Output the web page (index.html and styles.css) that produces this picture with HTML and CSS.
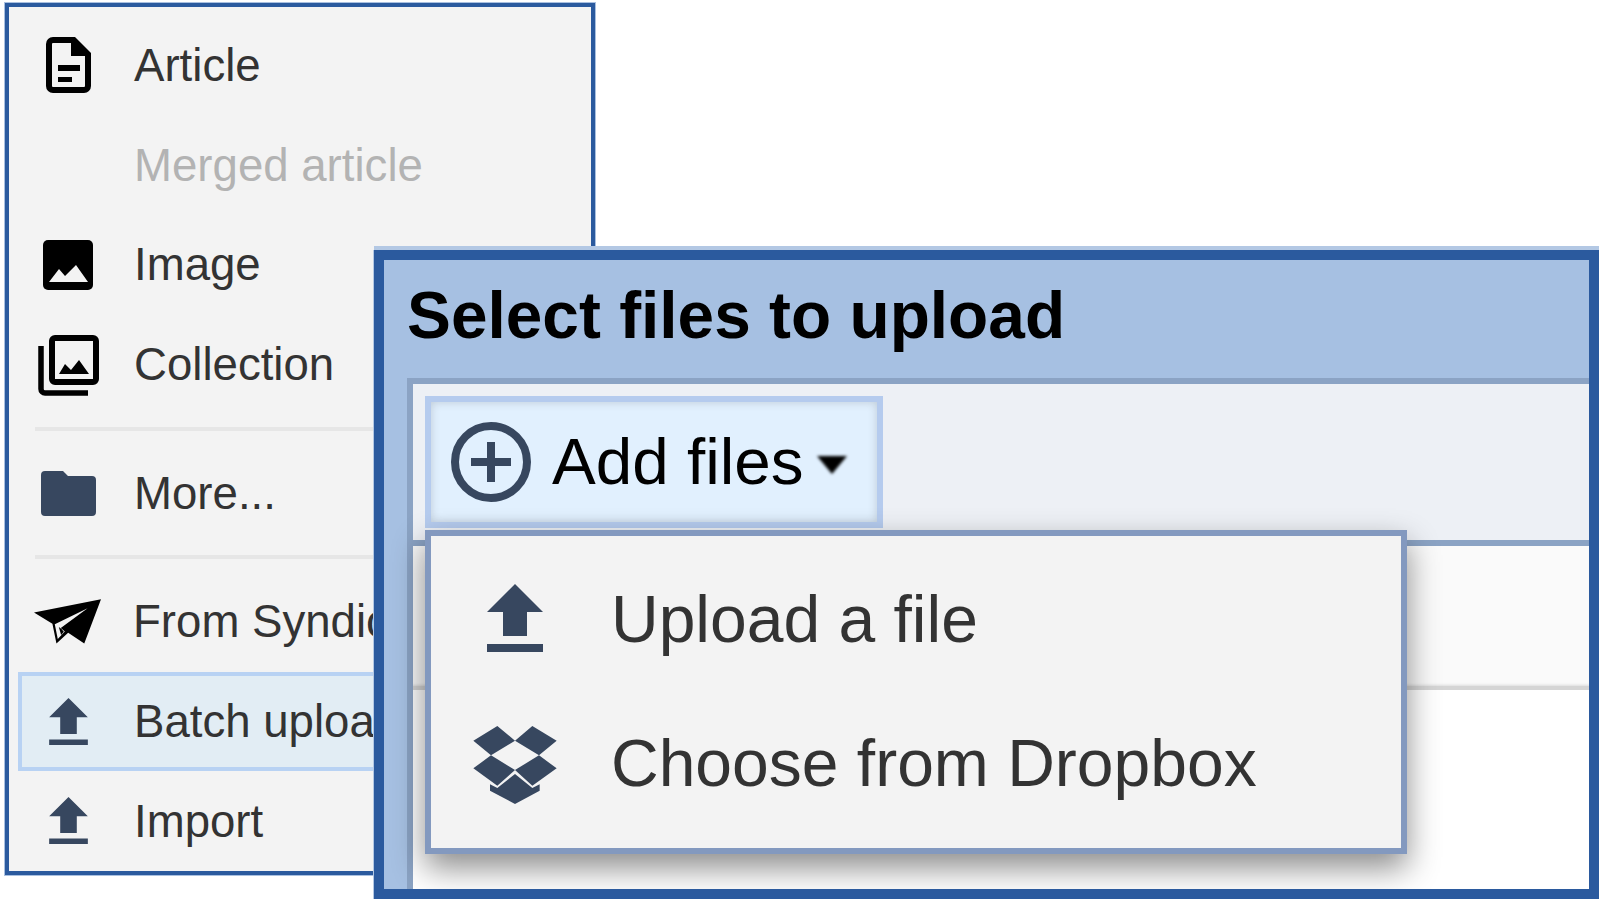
FILE: index.html
```html
<!DOCTYPE html>
<html lang="en">
<head>
  <meta charset="UTF-8" />
  <title>Select files to upload</title>
  <link rel="stylesheet" href="styles.css">
</head>
<body>
  <div class="new-menu">
    <div class="row">
      <span class="row-icon">
        <svg width="45" height="56" viewBox="0 0 45 56"><path fill-rule="evenodd" d="M7 0H29L45 16V49a7 7 0 0 1-7 7H7a7 7 0 0 1-7-7V7a7 7 0 0 1 7-7ZM7 6a1 1 0 0 0-1 1V49a1 1 0 0 0 1 1H38a1 1 0 0 0 1-1V19H25V6Z"/><path d="M12 28H34V34H12ZM12 40H26V45H12Z"/></svg>
      </span>
      <span class="row-label">Article</span>
    </div>
    <div class="row row-disabled">
      <span class="row-icon"></span>
      <span class="row-label">Merged article</span>
    </div>
    <div class="row">
      <span class="row-icon icon-image">
        <svg width="50" height="50" viewBox="0 0 50 50"><rect width="50" height="50" rx="5"/><path fill="#f3f3f3" d="M6 42L16 29L22 36L33 25L45 42Z"/></svg>
      </span>
      <span class="row-label">Image</span>
    </div>
    <div class="row">
      <span class="row-icon icon-collection">
        <svg width="61" height="61" viewBox="0 0 61 61"><rect x="14" y="3" width="44" height="44" rx="3" fill="none" stroke="#000" stroke-width="6"/><path d="M21 39L27 29L33 35L41 25L51 39Z"/><path d="M3 11V54a4 4 0 0 0 4 4H50" fill="none" stroke="#000" stroke-width="5.5"/></svg>
      </span>
      <span class="row-label">Collection</span>
    </div>
    <div class="divider"></div>
    <div class="row">
      <span class="row-icon icon-folder">
        <svg width="55" height="45" viewBox="0 0 55 45"><path fill="#37475f" d="M4 0H22L27 5H51a4 4 0 0 1 4 4V41a4 4 0 0 1-4 4H4a4 4 0 0 1-4-4V4a4 4 0 0 1 4-4Z"/></svg>
      </span>
      <span class="row-label">More...</span>
    </div>
    <div class="divider"></div>
    <div class="row">
      <span class="row-icon icon-plane">
        <svg width="67" height="45" viewBox="18 25 200 133"><path d="M18 65L218 25L168 157L120 125L85 157L73 98Z"/><path fill="#f3f3f3" d="M178 52L80 100L89 144L110 121L98 111Z"/><path d="M92 108L99 132L107 122L100 114Z"/></svg>
      </span>
      <span class="row-label">From Syndication</span>
    </div>
    <div class="row row-active">
      <span class="row-icon">
        <svg width="39" height="47" viewBox="0 0 56 68"><path fill="#37475f" d="M28 0L56 28H40V52H16V28H0ZM0 60H56V68H0Z"/></svg>
      </span>
      <span class="row-label">Batch upload</span>
    </div>
    <div class="row">
      <span class="row-icon">
        <svg width="39" height="47" viewBox="0 0 56 68"><path fill="#37475f" d="M28 0L56 28H40V52H16V28H0ZM0 60H56V68H0Z"/></svg>
      </span>
      <span class="row-label">Import</span>
    </div>
  </div>

  <div class="dialog">
    <h1 class="dialog-title">Select files to upload</h1>
    <div class="dialog-body">
      <div class="toolbar">
        <div class="add-button">
          <svg width="80" height="80" viewBox="0 0 80 80"><circle cx="40" cy="40" r="36" fill="none" stroke="#37475f" stroke-width="8"/><path fill="#37475f" d="M36 20H44V36H60V44H44V60H36V44H20V36H36Z"/></svg>
          <span class="add-label">Add files</span>
          <span class="caret"></span>
        </div>
      </div>
      <div class="file-row"></div>
    </div>

    <div class="add-menu">
      <div class="menu-row">
        <span class="menu-icon icon-upload">
          <svg width="56" height="68" viewBox="0 0 56 68"><path fill="#37475f" d="M28 0L56 28H40V52H16V28H0ZM0 60H56V68H0Z"/></svg>
        </span>
        <span>Upload a file</span>
      </div>
      <div class="menu-row">
        <span class="menu-icon icon-dropbox">
          <svg width="84" height="78" viewBox="0 0 250 234"><path fill="#37475f" d="M72 0L125 44L53 88L0 44ZM177 0L250 44L197 88L125 44ZM53 88L125 132L72 179L0 127ZM197 88L250 127L177 179L125 132ZM125 144L177 186L199 175V194L125 234L50 194V175L72 186Z"/></svg>
        </span>
        <span>Choose from Dropbox</span>
      </div>
    </div>
  </div>
</body>
</html>
```

FILE: styles.css
```css
html, body { margin: 0; padding: 0; height: 900px; overflow: hidden; background: #fff; }
body { font-family: "Liberation Sans", Arial, sans-serif; color: #333; }

/* the two windows overlap like on a desktop */
.new-menu { position: absolute; left: 5px; top: 3px; width: 590px; height: 872px; box-sizing: border-box; padding-top: 8px; border: 4px solid #2b5a9e; box-shadow: 0 0 0 1px #a9c0e0; background: #f3f3f3; font-size: 45.6px; overflow: hidden; }
.row { display: flex; align-items: center; gap: 7px; height: 99.7px; white-space: nowrap; }
.row-label { padding-top: 2px; }
.row-icon { display: flex; justify-content: center; align-items: center; flex: none; width: 118px; }
.icon-image { margin-top: 2px; }
.icon-collection { margin-top: 4px; }
.icon-folder { margin-top: 2px; }
.icon-plane { margin-left: -1px; }
.row-disabled { color: #b3b3b3; }
.row-active { box-sizing: border-box; height: 98.7px; margin: 1px 0 0 13px; gap: 20px; border-top: 4px solid #b8d2f3; border-bottom: 4px solid #b8d2f3; background: #e2edf4; box-shadow: -4px 0 0 #b8d2f3; }
.row-active .row-icon { width: 92px; }
.divider { height: 4px; margin: 13px 0 12px 26px; background: #e6e6e6; }

.dialog { position: absolute; left: 374px; top: 250px; width: 1225px; height: 649px; box-sizing: border-box; display: flex; flex-direction: column; border: 10px solid #2b5a9e; box-shadow: 0 -4px 0 #b3c8e4, -1px 0 0 #b3c8e4; background: #a6c0e2; overflow: hidden; }
.dialog-title { flex: none; height: 118px; margin: 0; padding-left: 23px; font-size: 65.8px; font-weight: bold; line-height: 111px; color: #000; }
.dialog-body { flex: 1; margin-left: 23px; border-top: 6px solid #8ba3c4; border-left: 6px solid #8ba3c4; background: #fff; }
.toolbar { box-sizing: border-box; height: 162px; padding: 12px; border-bottom: 6px solid #8ba3c4; background: #edf0f5; }
.add-button { box-sizing: border-box; display: flex; align-items: center; width: 458px; height: 132px; padding-left: 20px; border: 6px solid #b5cbee; background: #e1f0fe; box-shadow: inset 0 0 10px rgba(0, 0, 0, .16); font-size: 65.6px; color: #000; }
.add-label { margin-left: 21px; padding-bottom: 2px; }
.caret { width: 0; height: 0; margin: 6px 0 0 13px; border-top: 18px solid #000; border-left: 15px solid transparent; border-right: 15px solid transparent; filter: blur(1.5px); }
.file-row { box-sizing: border-box; height: 144px; border-bottom: 4px solid #d5d5d5; background: #fafafa; box-shadow: inset 0 -3px 3px -2px rgba(0, 0, 0, .12); }

.add-menu { position: absolute; left: 41px; top: 270px; width: 982px; box-sizing: border-box; padding: 11px 0 13px; border: 6px solid #8399bf; background: #f3f3f3; box-shadow: 0 14px 30px rgba(0, 0, 0, .45); font-size: 66px; }
.menu-row { display: flex; align-items: center; gap: 12px; height: 144px; white-space: nowrap; }
.menu-icon { display: flex; justify-content: center; flex: none; width: 168px; }
.icon-upload { margin-bottom: 2px; }
.icon-dropbox { margin-top: 4px; }
```
